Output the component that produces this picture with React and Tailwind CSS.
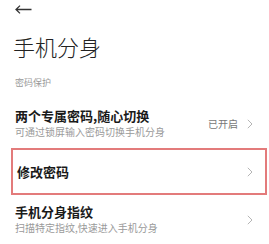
import { useState } from 'react';

function Chevron() {
  return (
    <svg width="6" height="10" viewBox="0 0 6 10" className="flex-shrink-0">
      <path d="M0.8 0.8 L5 5 L0.8 9.2" fill="none" stroke="#b5b5b5" strokeWidth="1" />
    </svg>
  );
}

function BackArrow() {
  return (
    <svg width="17" height="9" viewBox="0 0 17 9">
      <path d="M1 4.5 H16.5 M5 0.6 L1 4.5 L5 8.4" fill="none" stroke="#333" strokeWidth="1.3" />
    </svg>
  );
}

function Row({ title, subtitle, value }) {
  return (
    <div className="flex items-center justify-between pl-[15px] pr-[16px]">
      <div>
        <div className="text-[13px] leading-[16px] font-bold text-[#1a1a1a]">{title}</div>
        <div className="mt-[1px] text-[10px] leading-[14px] text-[#9a9a9a]">{subtitle}</div>
      </div>
      <div className="flex items-center gap-[9px]">
        {value && <span className="text-[10px] text-[#777]">{value}</span>}
        <Chevron />
      </div>
    </div>
  );
}

export default function App() {
  const [selected] = useState('password');
  return (
    <div
      className="w-[269px] h-[244px] bg-white overflow-hidden"
      style={{ fontFamily: '"Noto Sans CJK SC", "Noto Sans", sans-serif' }}
    >
      <div className="mt-[5px] h-[9px] pl-[15px] flex items-center">
        <BackArrow />
      </div>
      <h1 className="mt-[21px] pl-[13px] text-[22px] leading-[22px] font-light text-[#222]">手机分身</h1>
      <div className="mt-[20px] pl-[15px] text-[9px] leading-[12px] text-[#999]">密码保护</div>
      <div className="mt-[19px]">
        <Row title="两个专属密码,随心切换" subtitle="可通过锁屏输入密码切换手机分身" value="已开启" />
      </div>
      <div
        className={`mt-[9px] ml-[11px] w-[256px] h-[47px] flex items-center justify-between pl-[2px] pr-[12px] border-2 ${selected === 'password' ? 'border-[#e37b7b]' : 'border-transparent'}`}
      >
        <span className="pl-[2px] text-[13px] leading-[16px] font-bold text-[#1a1a1a]">修改密码</span>
        <Chevron />
      </div>
      <div className="mt-[9px]">
        <Row title="手机分身指纹" subtitle="扫描特定指纹,快速进入手机分身" />
      </div>
    </div>
  );
}
